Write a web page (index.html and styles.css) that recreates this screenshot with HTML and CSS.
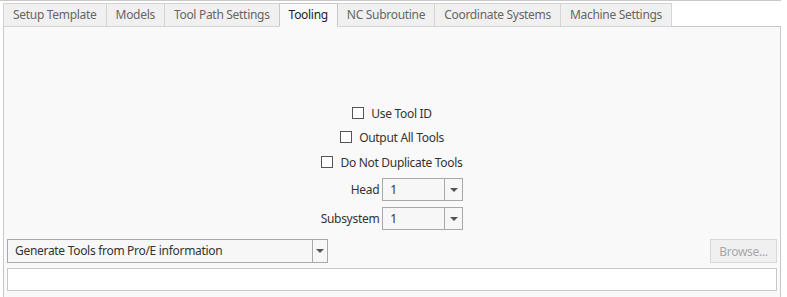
FILE: index.html
```html
<!DOCTYPE html>
<html lang="en">
<head>
  <meta charset="UTF-8" />
  <title>Tooling</title>
  <link rel="stylesheet" href="styles.css">
</head>
<body>

  <div class="window">
    <!-- Tabs -->
    <div class="tabs">
      <div class="tab">Setup Template</div>
      <div class="tab">Models</div>
      <div class="tab">Tool Path Settings</div>
      <div class="tab active">Tooling</div>
      <div class="tab">NC Subroutine</div>
      <div class="tab">Coordinate Systems</div>
      <div class="tab">Machine Settings</div>
    </div>

    <!-- Tooling panel -->
    <div class="panel">
      <div class="options">
        <label class="check-row"><span class="box"></span>Use Tool ID</label>
        <label class="check-row"><span class="box"></span>Output All Tools</label>
        <label class="check-row"><span class="box"></span>Do Not Duplicate Tools</label>

        <div class="fields">
          <span class="field-label">Head</span>
          <div class="combo small">
            <span class="combo-text">1</span>
            <span class="combo-arrow"></span>
          </div>
          <span class="field-label">Subsystem</span>
          <div class="combo small">
            <span class="combo-text">1</span>
            <span class="combo-arrow"></span>
          </div>
        </div>
      </div>

      <div class="source-row">
        <div class="combo wide">
          <span class="combo-text">Generate Tools from Pro/E information</span>
          <span class="combo-arrow"></span>
        </div>
        <button class="browse" disabled>Browse...</button>
      </div>

      <div class="path-field"></div>
    </div>
  </div>

</body>
</html>
```

FILE: styles.css
```css
* {
  box-sizing: border-box;
}

body {
  background-color: #fff;
  font-family: "Noto Sans", "Open Sans", sans-serif;
  font-size: 12px;
  letter-spacing: -0.3px;
  color: #333;
  margin: 0;
}

.window {
  width: 781px;
  height: 297px;
  border-top: 1px solid #c8c8c8;
  padding: 2px 0 0 3px;
}

.tabs {
  display: flex;
  height: 24px;
}

.tab {
  height: 24px;
  padding: 0 9px;
  line-height: 22px;
  background-color: #f0f0f0;
  color: #666;
  border: 1px solid #d4d4d4;
  border-right: none;
  white-space: nowrap;
}

.tab:last-child {
  border-right: 1px solid #d4d4d4;
}

.tab.active {
  background-color: #f9f9f9;
  color: #222;
  border-color: #c8c8c8;
  border-bottom-color: #f9f9f9;
  position: relative;
  z-index: 1;
  border-right: 1px solid #c8c8c8;
  margin-right: -1px;
}

.panel {
  width: 778px;
  height: 271px;
  margin-top: -1px;
  background-color: #f9f9f9;
  border: 1px solid #c8c8c8;
  border-bottom: none;
  padding: 0 3px;
}

.options {
  display: flex;
  flex-direction: column;
  align-items: center;
  padding-top: 74px;
}

.check-row {
  display: flex;
  align-items: center;
  height: 24px;
  gap: 7px;
  color: #333;
}

.check-row:nth-child(3) {
  margin-top: 1px;
}

.box {
  width: 12px;
  height: 12px;
  border: 1px solid #555;
  background-color: #fff;
}

.fields {
  display: grid;
  grid-template-columns: auto 81px;
  column-gap: 3px;
  row-gap: 6px;
  align-items: center;
  margin-top: 4px;
}

.field-label {
  text-align: right;
}

.combo {
  display: flex;
  height: 23px;
  border: 1px solid #a9a9a9;
  background-color: #f7f7f7;
}

.combo-text {
  flex: 1;
  line-height: 21px;
  padding-left: 7px;
  white-space: nowrap;
  overflow: hidden;
}

.combo-arrow {
  width: 18px;
  border-left: 1px solid #a9a9a9;
  position: relative;
}

.combo-arrow::after {
  content: "";
  position: absolute;
  left: 50%;
  top: 9px;
  margin-left: -4px;
  border-left: 4px solid transparent;
  border-right: 4px solid transparent;
  border-top: 4px solid #555;
}

.combo.wide {
  width: 321px;
  height: 24px;
}

.combo.wide .combo-text {
  line-height: 22px;
}

.combo.wide .combo-arrow {
  width: 15px;
}

.source-row {
  display: flex;
  justify-content: space-between;
  align-items: center;
  margin-top: 9px;
}

.browse {
  width: 67px;
  height: 24px;
  font-family: inherit;
  font-size: 12px;
  letter-spacing: -0.3px;
  color: #a8a8a8;
  background-color: #f0f0f0;
  border: 1px solid #d8d8d8;
  padding: 0;
}

.path-field {
  height: 23px;
  margin-top: 5px;
  background-color: #fff;
  border: 1px solid #c8c8c8;
}
```
